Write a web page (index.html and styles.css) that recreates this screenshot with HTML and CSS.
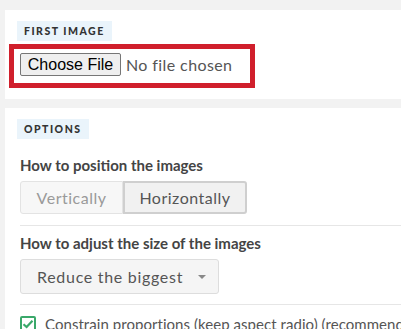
FILE: index.html
```html
<!DOCTYPE html>
<html>
<head>
  <title>Merge images</title>
  <link rel="stylesheet" href="styles.css">
</head>
<body>
  <div class="page">
    <div class="card">
      <span class="tag">First image</span>
      <div class="highlight">
        <button class="file-btn">Choose File</button>
        <span class="file-name">No file chosen</span>
      </div>
    </div>

    <div class="card options">
      <span class="tag">Options</span>

      <h3 class="field-title">How to position the images</h3>
      <div class="toggle">
        <button class="toggle-item">Vertically</button>
        <button class="toggle-item active">Horizontally</button>
      </div>

      <hr class="sep">

      <h3 class="field-title">How to adjust the size of the images</h3>
      <div class="select">
        <span>Reduce the biggest</span>
        <span class="caret"></span>
      </div>

      <hr class="sep">

      <label class="check">
        <span class="box">
          <svg width="12" height="10" viewBox="0 0 12 10"><path d="M1.5 5.2 L4.6 8 L10.5 1.8" fill="none" stroke="#3aa86a" stroke-width="2.2"/></svg>
        </span>
        Constrain proportions (keep aspect radio) (recommended)
      </label>
    </div>
  </div>
</body>
</html>
```

FILE: styles.css
```css
body {
  margin: 0;
  background-color: #f2f2f2;
  font-family: Lato, "Open Sans", sans-serif;
  overflow: hidden;
}

.page {
  padding: 10px 0 0 5px;
  width: 440px;
}

.card {
  background-color: #ffffff;
  padding: 9px 12px 11px 12px;
  margin-bottom: 9px;
}

.tag {
  display: inline-block;
  background-color: #eaf4fb;
  color: #333333;
  font-size: 10.5px;
  font-weight: 900;
  letter-spacing: 1.5px;
  text-transform: uppercase;
  line-height: 20px;
  padding: 0 7px;
}

.highlight {
  box-sizing: border-box;
  width: 246px;
  margin: 3px 0 0 -8px;
  border: 5px solid #d01f2c;
  padding: 4px 6px 7px 6px;
  display: flex;
  align-items: center;
}

.file-btn {
  font-family: "Liberation Sans", Arial, sans-serif;
  font-size: 16px;
  color: #000000;
  background-color: #efefef;
  border: 1px solid #767676;
  border-radius: 2px;
  height: 23px;
  width: 101px;
  padding: 0;
}

.file-name {
  margin-left: 5px;
  font-size: 16px;
  letter-spacing: 0.4px;
  color: #555555;
}

.field-title {
  margin: 16px 0 6px 3px;
  font-size: 15px;
  line-height: 20px;
  font-weight: bold;
  color: #444444;
}

.toggle {
  display: flex;
  margin-left: 3px;
}

.toggle-item {
  font-family: Lato, sans-serif;
  font-size: 16px;
  letter-spacing: 0.5px;
  height: 33px;
  padding: 0;
  background-color: #f7f7f7;
  color: #9a9a9a;
  border: 1px solid #e3e3e3;
}

.toggle-item:first-child {
  border-radius: 3px 0 0 3px;
  width: 103px;
}

.toggle-item.active {
  background-color: #f1f1f1;
  color: #555555;
  border: 2px solid #cfcfcf;
  border-radius: 0 3px 3px 0;
  width: 124px;
}

.sep {
  border: none;
  border-top: 1px solid #e6e6e6;
  margin: 11px 0 0 3px;
}

.sep + .field-title {
  margin-top: 7px;
}

.select {
  box-sizing: border-box;
  width: 199px;
  height: 35px;
  margin-left: 3px;
  background-color: #f5f5f5;
  border: 1px solid #dddddd;
  border-radius: 3px;
  display: flex;
  align-items: center;
  justify-content: space-between;
  padding: 0 12px 0 16px;
  font-size: 16px;
  color: #555555;
  letter-spacing: 0.7px;
}

.caret {
  width: 0;
  height: 0;
  border-left: 4px solid transparent;
  border-right: 4px solid transparent;
  border-top: 4px solid #888888;
}

.select + .sep {
  margin-top: 10px;
}

.check {
  display: flex;
  align-items: center;
  margin: 10px 0 0 3px;
  font-size: 15px;
  letter-spacing: 0.05px;
  color: #555555;
  white-space: nowrap;
}

.box {
  box-sizing: border-box;
  width: 16px;
  height: 16px;
  border: 2px solid #3aa86a;
  border-radius: 2px;
  display: flex;
  align-items: center;
  justify-content: center;
  margin-right: 9px;
}
```
